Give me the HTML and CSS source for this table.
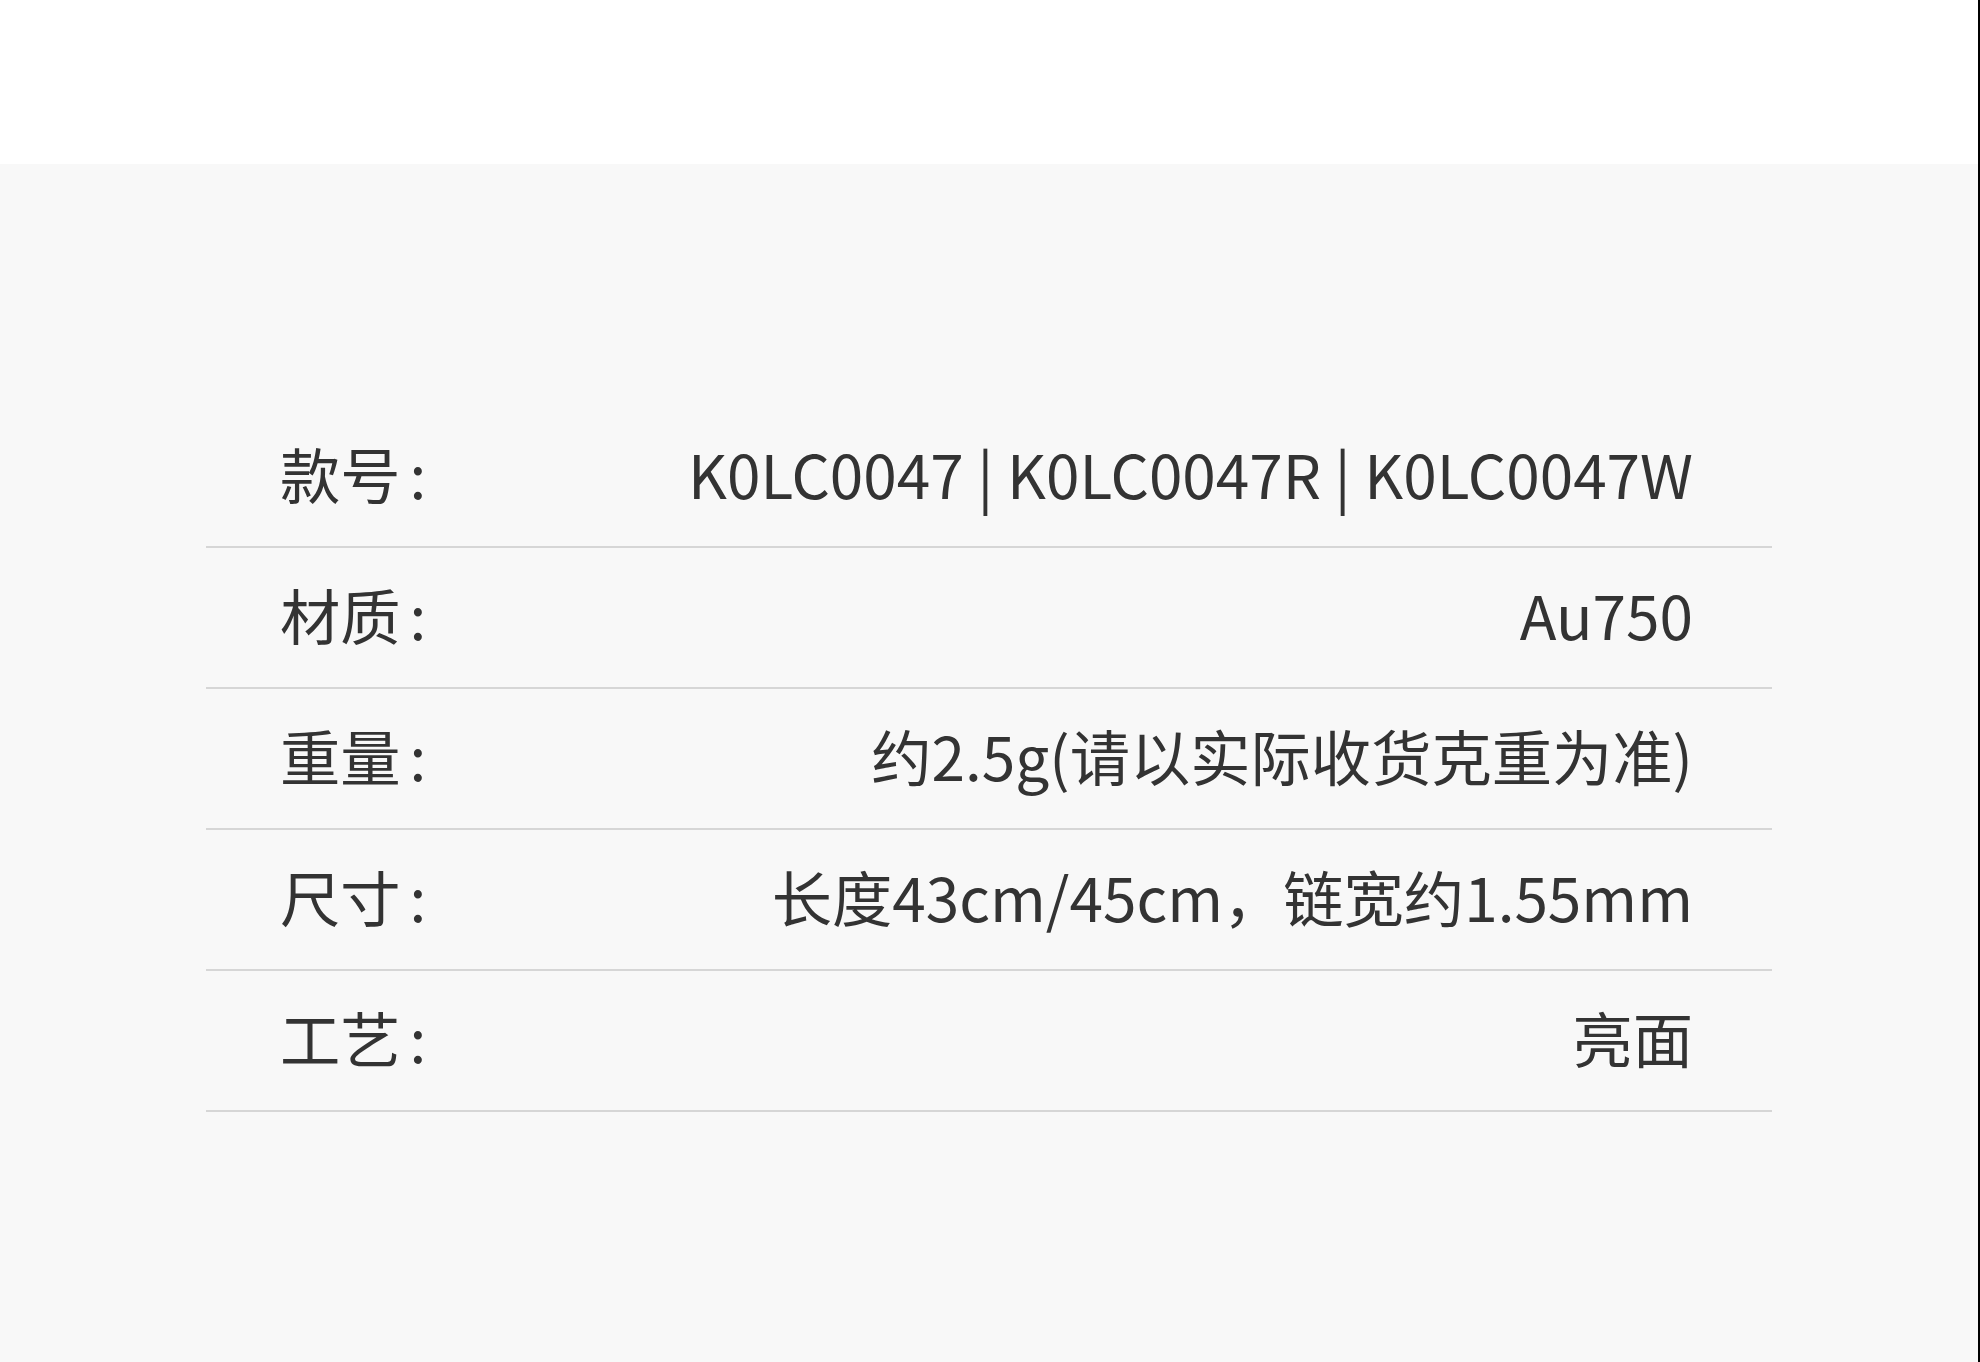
FILE: index.html
```html
<!DOCTYPE html>
<html lang="zh-CN">
<head>
<meta charset="utf-8">
<title>商品参数</title>
<link rel="stylesheet" href="styles.css">
</head>
<body>
<div class="page">
  <div class="top"></div>
  <section class="specs">
    <div class="table">
      <div class="row"><span class="label">款号<span class="colon">:</span></span><span class="value">K0LC0047 | K0LC0047R | K0LC0047W</span></div>
      <div class="row"><span class="label">材质<span class="colon">:</span></span><span class="value">Au750</span></div>
      <div class="row"><span class="label">重量<span class="colon">:</span></span><span class="value">约2.5g(请以实际收货克重为准)</span></div>
      <div class="row"><span class="label">尺寸<span class="colon">:</span></span><span class="value">长度43cm/45cm，链宽约1.55mm</span></div>
      <div class="row"><span class="label">工艺<span class="colon">:</span></span><span class="value">亮面</span></div>
    </div>
  </section>
</div>
</body>
</html>
```

FILE: styles.css
```css
html, body {
  margin: 0;
  padding: 0;
  background: #000;
}
body {
  width: 1980px;
  height: 1362px;
  overflow: hidden;
  font-family: "Noto Sans CJK SC", "Noto Sans", sans-serif;
  color: #333;
}
.page {
  width: 1978px;
  height: 1362px;
  display: flex;
  flex-direction: column;
  background: #f8f8f8;
}
.top {
  height: 164px;
  background: #fff;
  flex: none;
}
.specs {
  flex: 1;
  padding-top: 243px;
  display: flex;
  justify-content: center;
}
.table {
  width: 1566px;
  display: flex;
  flex-direction: column;
}
.row {
  height: 139px;
  box-sizing: content-box;
  border-bottom: 2px solid #d6d6d6;
  display: flex;
  align-items: center;
  justify-content: space-between;
  padding: 0 79px 0 74px;
  font-size: 60.3px;
  line-height: 1;
}
.label, .value {
  white-space: nowrap;
  position: relative;
  top: -3px;
}
.colon {
  margin-left: 9px;
}
```
